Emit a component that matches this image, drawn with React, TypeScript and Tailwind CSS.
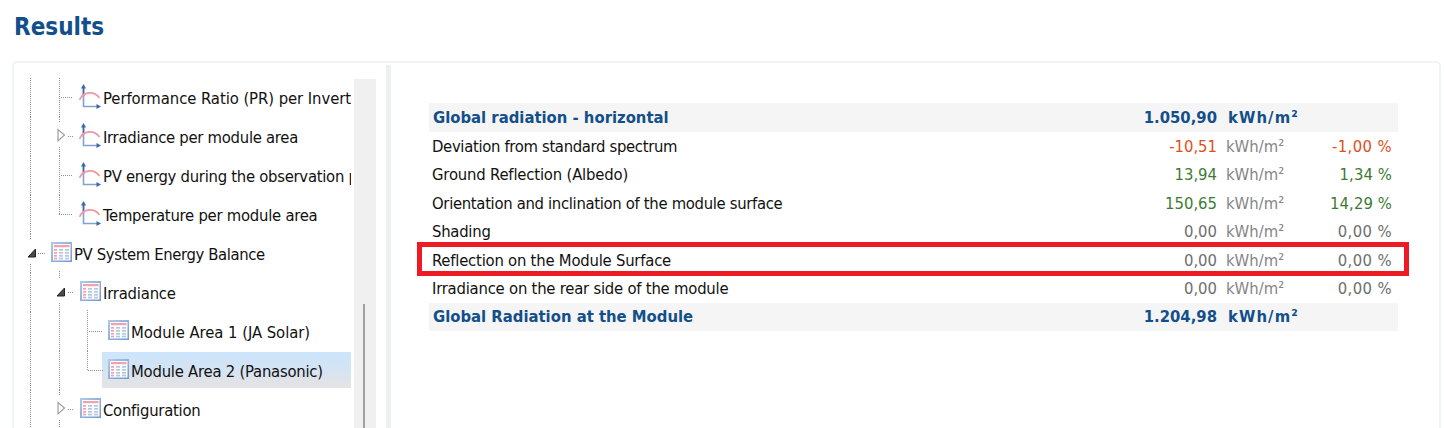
import React from 'react';

type Line = [number, number, number, number];

type TreeNode = {
    label: string;
    tracking: string;
    icon: 'chart' | 'table';
    indent: number;
    lines: Line[];
    arrow?: 'open' | 'closed';
    arrowX?: number;
    selected?: boolean;
};

// guide lines are relative to the tree (x) and the row (y)
const nodes: TreeNode[] = [
    { label: 'Performance Ratio (PR) per Invert', tracking: 'tracking-[-0.06px]', icon: 'chart', indent: 65, lines: [[16, 0, 16, 39], [45, 0, 45, 39], [47, 19, 59, 19]] },
    { label: 'Irradiance per module area', tracking: 'tracking-[-0.28px]', icon: 'chart', indent: 65, arrow: 'closed', arrowX: 44, lines: [[16, 0, 16, 39], [45, 0, 45, 5], [45, 30, 45, 39], [54, 19, 59, 19]] },
    { label: 'PV energy during the observation p', tracking: 'tracking-[-0.27px]', icon: 'chart', indent: 65, lines: [[16, 0, 16, 39], [45, 0, 45, 39], [47, 19, 59, 19]] },
    { label: 'Temperature per module area', tracking: 'tracking-[-0.25px]', icon: 'chart', indent: 65, lines: [[16, 0, 16, 39], [45, 0, 45, 19], [45, 19, 59, 19]] },
    { label: 'PV System Energy Balance', tracking: 'tracking-[-0.37px]', icon: 'table', indent: 37, arrow: 'open', arrowX: 14, lines: [[16, 0, 16, 5], [16, 30, 16, 39], [24, 19, 31, 19], [45, 37, 45, 39]] },
    { label: 'Irradiance', tracking: 'tracking-[-0.2px]', icon: 'table', indent: 66, arrow: 'open', arrowX: 43, lines: [[16, 0, 16, 39], [45, 0, 45, 5], [45, 30, 45, 39], [54, 19, 59, 19], [73, 37, 73, 39]] },
    { label: 'Module Area 1 (JA Solar)', tracking: 'tracking-[-0.04px]', icon: 'table', indent: 94, lines: [[16, 0, 16, 39], [45, 0, 45, 39], [73, 0, 73, 39], [75, 19, 89, 19]] },
    { label: 'Module Area 2 (Panasonic)', tracking: 'tracking-[-0.23px]', icon: 'table', indent: 94, selected: true, lines: [[16, 0, 16, 39], [45, 0, 45, 39], [73, 0, 73, 19], [74, 19, 89, 19]] },
    { label: 'Configuration', tracking: 'tracking-[-0.25px]', icon: 'table', indent: 66, arrow: 'closed', arrowX: 44, lines: [[16, 0, 16, 39], [45, 0, 45, 5], [45, 30, 45, 39], [54, 19, 59, 19]] },
];

const rows = [
    { label: 'Deviation from standard spectrum', tracking: 'tracking-[-0.33px]', value: '-10,51', percent: '-1,00 %', percentTracking: 'tracking-[0.4px]', color: 'text-[#e04e1c]' },
    { label: 'Ground Reflection (Albedo)', tracking: 'tracking-[-0.18px]', value: '13,94', percent: '1,34 %', percentTracking: 'tracking-[0.1px]', color: 'text-[#3d7a35]' },
    { label: 'Orientation and inclination of the module surface', tracking: 'tracking-[-0.32px]', value: '150,65', percent: '14,29 %', percentTracking: 'tracking-[0.1px]', color: 'text-[#3d7a35]' },
    { label: 'Shading', tracking: 'tracking-[-0.25px]', value: '0,00', percent: '0,00 %', percentTracking: 'tracking-[0.4px]', color: 'text-[#6e6e6e]' },
    { label: 'Reflection on the Module Surface', tracking: 'tracking-[-0.22px]', value: '0,00', percent: '0,00 %', percentTracking: 'tracking-[0.4px]', color: 'text-[#6e6e6e]', marked: true },
    { label: 'Irradiance on the rear side of the module', tracking: 'tracking-[-0.22px]', value: '0,00', percent: '0,00 %', percentTracking: 'tracking-[0.4px]', color: 'text-[#6e6e6e]' },
];

const ChartIcon = () => (
    <svg width="23" height="26" viewBox="0 0 23 26" fill="none" className="mt-[5px] shrink-0">
        <path d="M4.5 4V23.5H19" stroke="#7fa3d0" strokeWidth="1.6" />
        <path d="M4.5 3V13" stroke="#3f68a8" strokeWidth="1.6" />
        <path d="M2 5.500L4.500 1L7 5.500Z" fill="#3f68a8" />
        <path d="M17.500 21L22 23.500L17.500 26Z" fill="#3f68a8" />
        <path d="M0.500 17C4 8.500 15 7.500 20.500 15" stroke="#f09aa6" strokeWidth="1.800" />
    </svg>
);

const TableIcon = () => (
    <svg width="21" height="20" viewBox="0 0 21 20" className="mt-2 shrink-0">
        <defs>
            <linearGradient id="frame" x1="0" y1="0" x2="1" y2="1">
                <stop offset="0" stopColor="#b0cbea" />
                <stop offset="1" stopColor="#6f97cf" />
            </linearGradient>
        </defs>
        <rect width="21" height="20" fill="url(#frame)" />
        <rect x="2" y="2" width="17.500" height="16.500" fill="#fbfcfe" />
        <rect x="3" y="3" width="15.500" height="2.200" fill="#f0a3ae" />
        {[7, 10, 13, 15.700].map((y) => (
            <g key={y}>
                <rect x="3" y={y} width="3" height="1.700" fill="#f0a3ae" />
                <rect x="8" y={y} width="4" height="1.700" fill="#b4c8e0" />
                <rect x="14" y={y} width="4" height="1.700" fill="#b4c8e0" />
            </g>
        ))}
    </svg>
);

const TreeRow = ({ node }: { node: TreeNode }) => (
    <li className="flex h-[39px] shrink-0">
        <svg width={node.indent} height="39" className="shrink-0 overflow-visible">
            {node.selected && (
                <>
                    <defs>
                        <linearGradient id="selection" x1="0" y1="0" x2="0" y2="1">
                            <stop offset="0" stopColor="#cde5fb" />
                            <stop offset="0.4" stopColor="#d2e4f5" />
                            <stop offset="0.85" stopColor="#e2e3e7" />
                            <stop offset="1" stopColor="#e3e4e8" />
                        </linearGradient>
                    </defs>
                    <rect x="88" y="1" width="249" height="36" fill="url(#selection)" />
                </>
            )}
            {node.lines.map(([x1, y1, x2, y2], i) =>
                y1 === y2 ? (
                    <line key={i} x1={x1} y1={y1 + 0.5} x2={x2} y2={y2 + 0.5} stroke="#909090" strokeDasharray="1 1" />
                ) : (
                    <line key={i} x1={x1 + 0.5} y1={y1} x2={x2 + 0.5} y2={y2} stroke="#909090" strokeDasharray="1 1" />
                )
            )}
            {node.arrow === 'closed' && <path d="M0 12.500V24L6.500 18Z" transform={`translate(${node.arrowX} 0)`} fill="white" stroke="#a0a0a0" strokeWidth="1.200" />}
            {node.arrow === 'open' && <path d="M7.500 15V23H0Z" transform={`translate(${node.arrowX} 0)`} fill="#4a4a4a" stroke="#222" />}
        </svg>
        {node.icon === 'chart' ? <ChartIcon /> : <TableIcon />}
        <span className={`relative whitespace-nowrap pt-px leading-[39px] ${node.icon === 'chart' ? 'pl-px' : 'pl-[2px]'} ${node.tracking}`}>{node.label}</span>
    </li>
);

const TotalRow = ({ label, value }: { label: string; value: string }) => (
    <div className="flex h-[28.5px] items-center bg-[#f5f5f5] pt-0.5 pl-1 font-bold text-[#134f8a]">
        <span className="flex-1">{label}</span>
        <span className="w-[100px] text-right">{value}</span>
        <span className="w-[181px] pl-[11px] tracking-[1.1px]">kWh/m²</span>
    </div>
);

const App = () => {
    return (
        <div className="flex h-[428px] flex-col overflow-hidden bg-white font-['DejaVu_Sans_Condensed','DejaVu_Sans',sans-serif] text-[16.5px] text-[#111] [font-stretch:condensed]">
            <h1 className="ml-3.5 h-[61px] shrink-0 pt-[10px] text-[24px] leading-[34px] font-bold text-[#134f8a]">Results</h1>
            <div className="mr-[3px] ml-3 flex h-[380px] shrink-0 rounded-t-[5px] border-2 border-[#eff4f4]">
                <ul className="mt-[15px] flex w-[337px] flex-col overflow-hidden">
                    {nodes.map((node) => (
                        <TreeRow key={node.label} node={node} />
                    ))}
                </ul>
                <div className="mt-4 ml-[3px] flex w-[22px] justify-center bg-[#f0f0f0]">
                    <div className="mt-[225px] mr-0.5 w-0.5 bg-[#a0a0a0]" />
                </div>
                <div className="mt-0.5 ml-2.5 w-[5px] bg-[#ebf1f2]" />
                <div className="mt-10 ml-[38px] w-[969px]">
                    <TotalRow label="Global radiation - horizontal" value="1.050,90" />
                    {rows.map((row) => (
                        <div key={row.label} className="relative flex h-[28.5px] items-center pt-[3px] pl-[3px]">
                            <span className={`flex-1 ${row.tracking}`}>{row.label}</span>
                            <span className={`w-[100px] text-right ${row.color}`}>{row.value}</span>
                            <span className="w-[90px] pl-[9px] text-[#858585]">kWh/m²</span>
                            <span className={`w-[91px] pr-[6px] text-right ${row.percentTracking} ${row.color}`}>{row.percent}</span>
                            {row.marked && <div className="absolute -top-1 -right-[11px] -left-3 h-[34px] border-5 border-[#ed1c24]" />}
                        </div>
                    ))}
                    <TotalRow label="Global Radiation at the Module" value="1.204,98" />
                </div>
            </div>
        </div>
    );
};

export default App;
